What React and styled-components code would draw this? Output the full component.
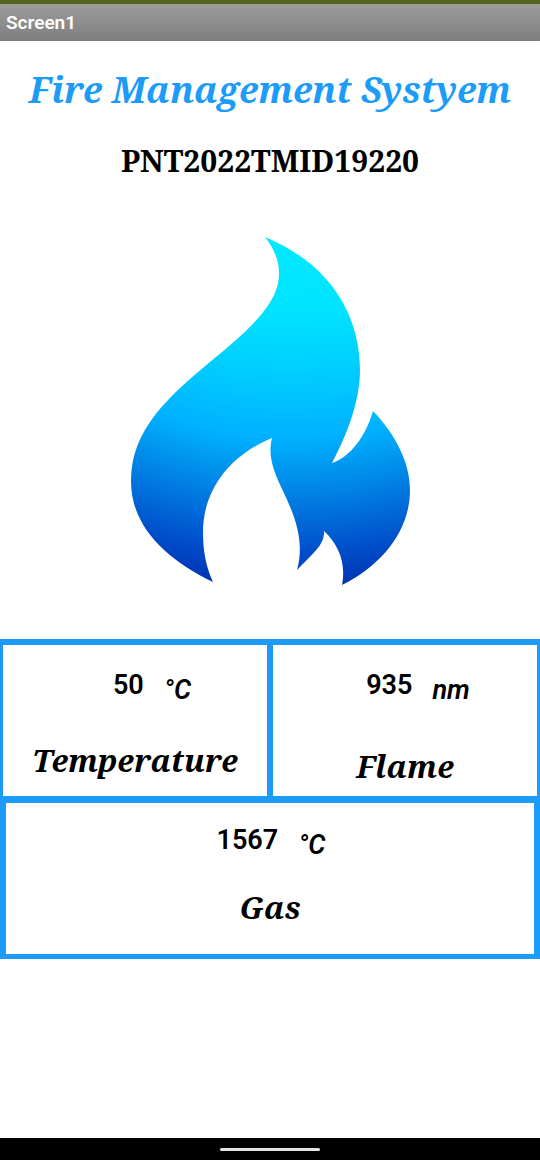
import React from "react";
import styled, { createGlobalStyle } from "styled-components";

const accent = "#1c9bf8";
const serif = '"Noto Serif", "DejaVu Serif Condensed", "DejaVu Serif", serif';
const sans = 'Roboto, "Liberation Sans", sans-serif';

const GlobalStyle = createGlobalStyle`
  *, *::before, *::after { box-sizing: border-box; }
  body { margin: 0; background: #fff; color: #000; font-family: ${sans}; }
  h1, h2, p { margin: 0; }
`;

const Screen = styled.div`
  display: flex;
  flex-direction: column;
  min-height: 100vh;
`;

const TitleBar = styled.header`
  padding: 0 6px;
  border-top: 4px solid #53661f;
  background: linear-gradient(#9c9c9c, #7e7e7e);
  color: #fff;
  font-size: 19px;
  font-weight: 600;
  line-height: 37px;
`;

const Content = styled.main`
  display: flex;
  flex: 1;
  flex-direction: column;
`;

const Heading = styled.h1`
  padding-top: 24px;
  color: ${accent};
  font: italic bold 36px/50px ${serif};
  text-align: center;
  white-space: nowrap;
`;

const TeamId = styled.p`
  padding-top: 26px;
  font: bold 30px/40px ${serif};
  text-align: center;
`;

const FlameArt = styled.svg`
  display: block;
  width: 280px;
  height: 350px;
  margin: 55px auto 53px;
`;

const Readings = styled.section`
  border: solid ${accent};
  border-width: 6px 0 5px;
  background: ${accent};
`;

const Row = styled.div`
  display: grid;
  grid-template-columns: repeat(${(p) => p.$columns}, 1fr);
  gap: 6px;
  padding: 0 ${(p) => p.$edge}px;

  & + & { margin-top: 7px; }
`;

const Cell = styled.article`
  display: flex;
  flex-direction: column;
  align-items: center;
  gap: ${(p) => p.$gap}px;
  min-height: 151px;
  padding-top: ${(p) => p.$top}px;
  background: #fff;
`;

const Measure = styled.p`
  display: flex;
  gap: 20px;
  padding-left: ${(p) => p.$inset}px;
  font-size: 27px;
  font-weight: 600;
  line-height: 32px;
`;

const Unit = styled.span`
  padding-top: 5px;
  font-style: italic;
`;

const Label = styled.h2`
  font: italic bold 31px/44px ${serif};
`;

const NavBar = styled.footer`
  display: flex;
  align-items: center;
  justify-content: center;
  height: 22px;
  background: #000;
`;

const Handle = styled.div`
  width: 100px;
  height: 3px;
  border-radius: 2px;
  background: #e6e2e6;
`;

function Flame() {
  return (
    <FlameArt viewBox="130 236 280 350" role="img" aria-label="Blue flame">
      <defs>
        <radialGradient id="flame" gradientUnits="userSpaceOnUse" cx="290" cy="68" r="520">
          <stop offset="0.33" stopColor="#00e9ff" />
          <stop offset="0.46" stopColor="#00e5ff" />
          <stop offset="0.6" stopColor="#00cbff" />
          <stop offset="0.715" stopColor="#00b0ff" />
          <stop offset="0.78" stopColor="#0093ee" />
          <stop offset="0.86" stopColor="#006fdc" />
          <stop offset="0.93" stopColor="#004fca" />
          <stop offset="1" stopColor="#0034b4" />
        </radialGradient>
      </defs>
      <path
        fill="url(#flame)"
        d="M265 237 C324 261 360 309 360 370 C360 402 346 437 332 463 C351 457 366 435 373 411 C396 435 410 463 410 490 C410 531 382 565 342 585 C346 565 340 546 324 531 C325 545 311 555 297 570 C305 542 295 516 283 491 C275 474 267 457 272 438 C230 455 203 490 203 532 C203 551 206 567 213 582 C168 560 131 528 131 481 C131 455 140 435 155 415 C189 372 244 342 269 304 C283 283 283 260 265 237 Z"
      />
    </FlameArt>
  );
}

function Reading({ value, unit, label, inset = 0, top = 24, gap = 32 }) {
  return (
    <Cell $top={top} $gap={gap}>
      <Measure $inset={inset}>
        <span>{value}</span>
        <Unit>{unit}</Unit>
      </Measure>
      <Label>{label}</Label>
    </Cell>
  );
}

export default function App() {
  return (
    <>
      <GlobalStyle />
      <Screen>
        <TitleBar>Screen1</TitleBar>
        <Content>
          <Heading>Fire Management Systyem</Heading>
          <TeamId>PNT2022TMID19220</TeamId>
          <Flame />
          <Readings>
            <Row $columns={2} $edge={3}>
              <Reading value="50" unit="°C" label="Temperature" inset={34} />
              <Reading value="935" unit="nm" label="Flame" inset={26} gap={38} />
            </Row>
            <Row $columns={1} $edge={6}>
              <Reading value="1567" unit="°C" label="Gas" inset={2} top={21} gap={24} />
            </Row>
          </Readings>
        </Content>
        <NavBar>
          <Handle />
        </NavBar>
      </Screen>
    </>
  );
}
